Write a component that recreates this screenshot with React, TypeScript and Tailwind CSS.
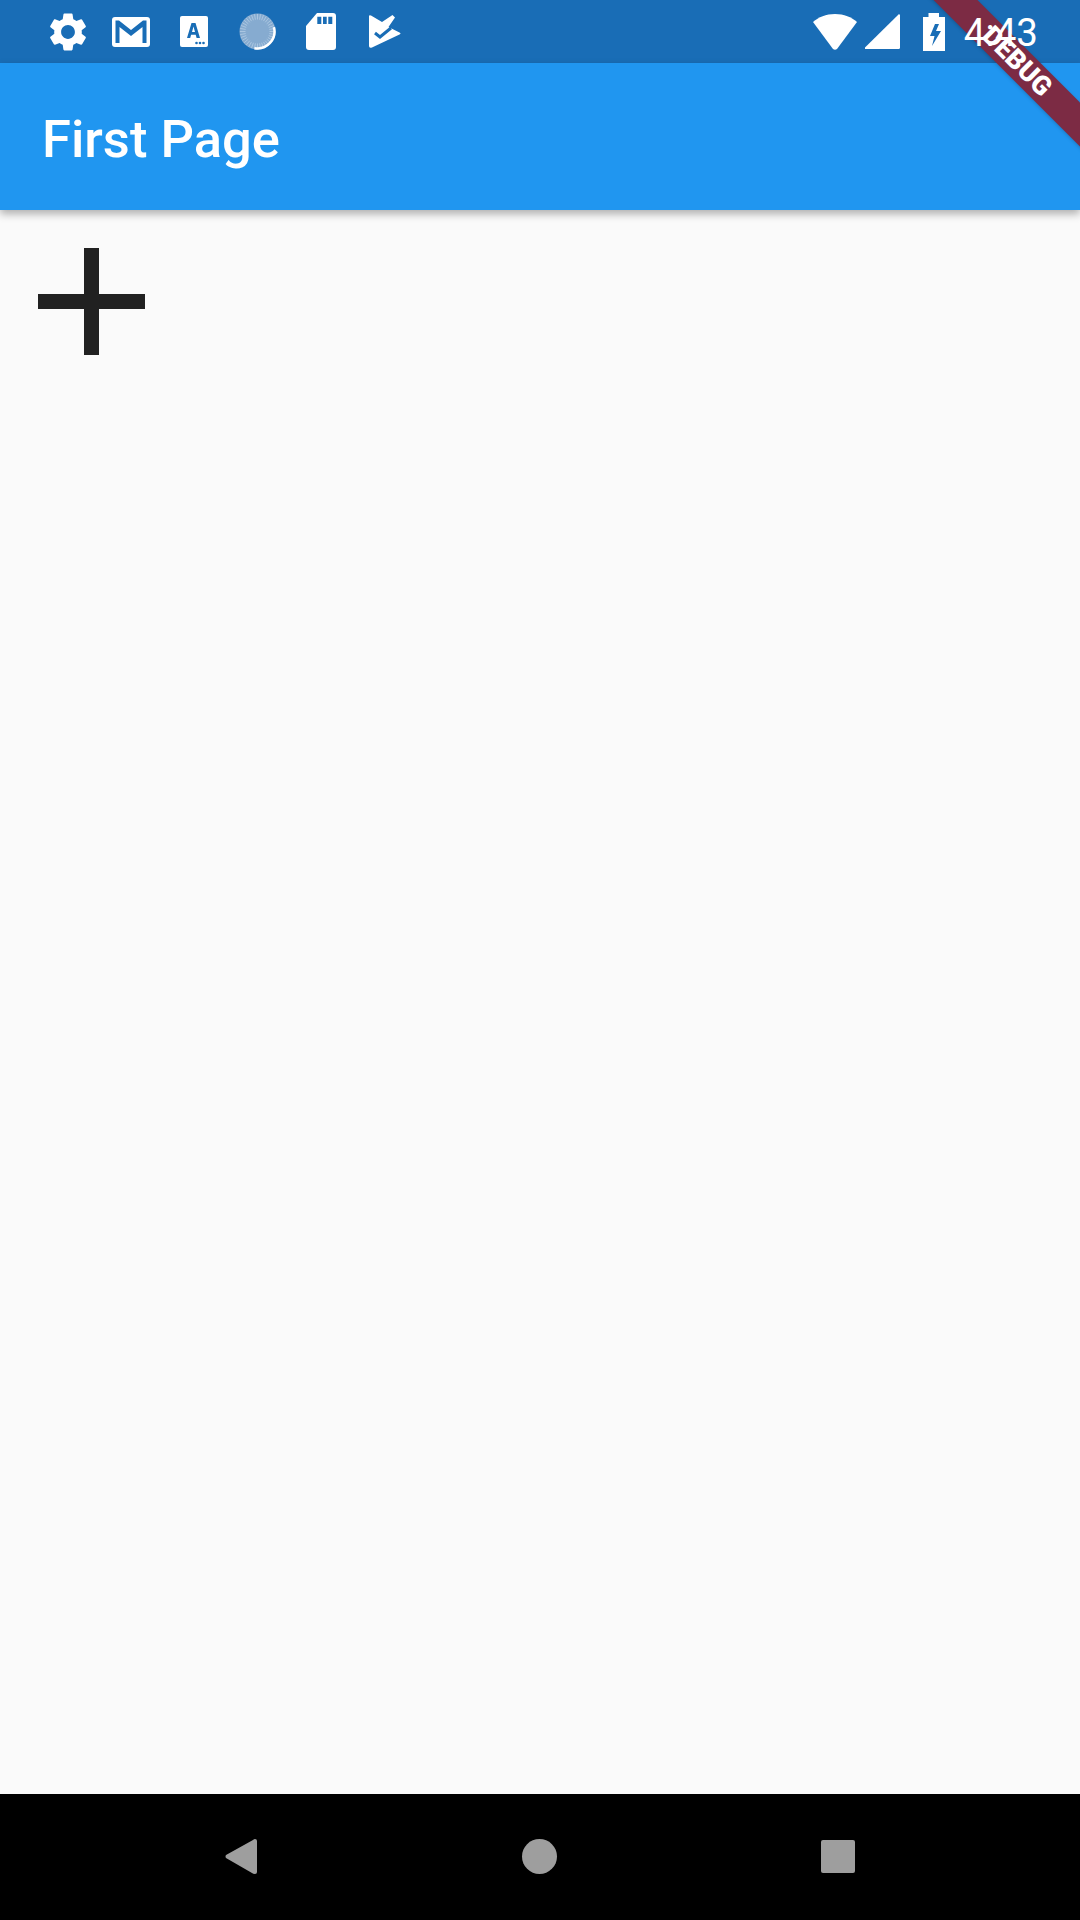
import { MdSettings } from "react-icons/md";

const roboto = "font-['Roboto',sans-serif]";
const ticks = Array.from({ length: 36 }, (_, i) => (i * Math.PI) / 18);

function StatusIcons() {
  return (
    <div className="flex items-center text-white">
      <MdSettings className="ml-[45px] w-[46px] h-[46px]" />
      {/* gmail */}
      <svg viewBox="0 0 38 30" className="ml-[21px] w-[38px] h-[30px]">
        <rect width="38" height="30" rx="3" fill="#fff" />
        <path fill="#196db6" d="M3.500 3.500H7L19 13 31 3.500h3.500V26h-4V10L19 19 7.500 10v16h-4z" />
      </svg>
      {/* translate */}
      <svg viewBox="0 0 28 31" className="ml-[30px] w-[28px] h-[31px]">
        <rect width="28" height="31" rx="2" fill="#fff" />
        <path fill="#196db6" fillRule="evenodd" d="M11.500 7h4L20 22h-3.400l-.9-3.200h-4.600L10.200 22H7zM13.500 10.500 12 16h3z" />
        <circle cx="16.500" cy="27" r="1.300" fill="#196db6" />
        <circle cx="20" cy="27" r="1.300" fill="#196db6" />
        <circle cx="23.500" cy="27" r="1.300" fill="#196db6" />
      </svg>
      {/* sync circle */}
      <svg viewBox="0 0 38 38" className="ml-[31px] w-[38px] h-[38px]">
        <circle cx="18.500" cy="18.500" r="18" fill="#86abd0" />
        {ticks.map((a) => (
          <line
            key={a}
            x1={18.5 + Math.cos(a) * 12}
            y1={18.5 + Math.sin(a) * 12}
            x2={18.5 + Math.cos(a) * 17.5}
            y2={18.5 + Math.sin(a) * 17.5}
            stroke="#b4cde4"
            strokeWidth="0.8"
          />
        ))}
        <path d="M34.900 14.100A17 17 0 0 1 15.500 35.200" fill="none" stroke="#fff" strokeWidth="2.500" />
      </svg>
      {/* sd card */}
      <svg viewBox="0 0 30 37" className="ml-[29px] w-[30px] h-[37px]">
        <path fill="#fff" d="M11 0h16a3 3 0 0 1 3 3v31a3 3 0 0 1-3 3H3a3 3 0 0 1-3-3V13z" />
        <path fill="#196db6" d="M11.300 3.700h4V11h-4zM17 3.700h3.700V11H17zM22.300 3.700h4V11h-4z" />
      </svg>
      {/* tasks */}
      <svg viewBox="0 0 32 33" className="ml-[33px] w-[32px] h-[33px]">
        <path fill="#fff" d="M0 1.500Q0-.5 2 .5L13 7 23.500 0 26 2.500 19.500 12l11 5.500q2 1 0 2L3 32.500Q0 33.500 0 31z" />
        <path fill="none" stroke="#196db6" strokeWidth="3" d="M6 18l5 4 11-9" />
      </svg>
      <div className="flex-1" />
      {/* wifi */}
      <svg viewBox="0 0 44 36" className="w-[44px] h-[36px]">
        <path fill="#fff" d="M22 0C13 0 5.500 3 0 8l20 27q2 1.500 4 0L44 8C38.500 3 31 0 22 0z" />
      </svg>
      {/* signal */}
      <svg viewBox="0 0 35 35" className="ml-[8px] w-[35px] h-[35px]">
        <path fill="#fff" d="M34 0 0 33.500V35h33.500q1.500 0 1.500-1.500V1z" />
      </svg>
      {/* battery */}
      <svg viewBox="0 0 22 38" className="ml-[23px] w-[22px] h-[38px]">
        <path fill="#fff" fillRule="evenodd" d="M5.500 0h10.500v4h6v34H0V4h5.500zM12 11 7 23h4.500L9 33l9-15h-5l3-7z" />
      </svg>
      <span className={`relative z-30 mt-[3px] ml-[19px] mr-[42px] text-[38.500px] leading-none text-white ${roboto}`}>4:43</span>
    </div>
  );
}

export default function App() {
  return (
    <div className={`relative flex flex-col w-[1080px] h-[1920px] overflow-hidden bg-[#fafafa] ${roboto}`}>
      <div className="h-[63px] shrink-0 flex items-center bg-[#196db6]">
        <div className="flex-1">
          <StatusIcons />
        </div>
      </div>

      <header className="h-[147px] shrink-0 flex items-center pt-[5px] px-[42px] bg-[#2096f0] shadow-[0_4px_8px_rgba(0,0,0,0.3)] z-10">
        <h1 className="text-[52.500px] font-medium leading-none text-white">First Page</h1>
      </header>

      <main className="flex-1 pt-[38px] pl-[38px]">
        <div className="relative w-[107px] h-[107px]">
          <div className="absolute left-[46px] top-0 w-[15px] h-[107px] bg-[#212121]" />
          <div className="absolute left-0 top-[46px] w-[107px] h-[15px] bg-[#212121]" />
        </div>
      </main>

      <nav className="h-[126px] shrink-0 bg-black flex items-center">
        <svg viewBox="0 0 32 35" className="ml-[225px] w-[32px] h-[35px] -mt-[2px]">
          <path fill="#9e9e9e" d="M30 0q2 0 2 2v31q0 2-2 2t-3-1L1 19q-1-1.500 0-3L28 1q1-1 2-1z" />
        </svg>
        <div className="ml-[265px] w-[35px] h-[35px] -mt-[2px] rounded-full bg-[#9e9e9e]" />
        <div className="ml-[264px] w-[34px] h-[33px] -mt-[2px] rounded-[2px] bg-[#9e9e9e]" />
      </nav>

      {/* debug banner */}
      <div className="absolute z-20 top-[46px] right-[-57px] w-[240px] h-[31px] rotate-45 flex items-center justify-center bg-[#7c2b44] shadow-[0_1px_4px_rgba(0,0,0,0.2)]">
        <span className="relative z-40 text-[26.800px] font-black leading-none text-white">DEBUG</span>
      </div>
    </div>
  );
}
